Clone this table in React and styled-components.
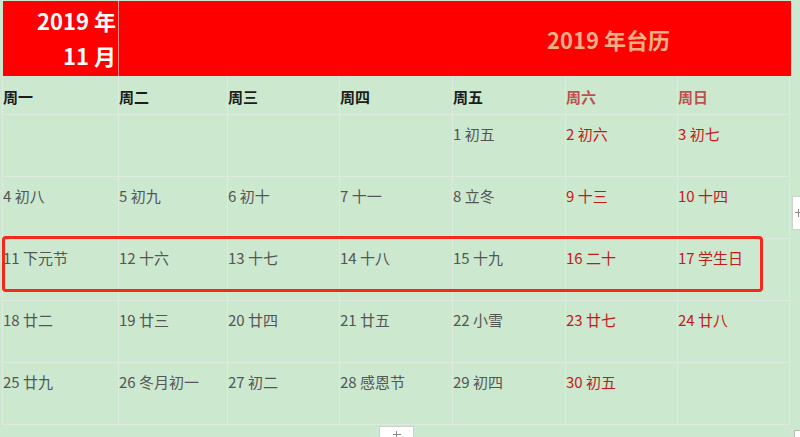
import React from 'react';
import styled, { createGlobalStyle } from 'styled-components';

const GlobalStyle = createGlobalStyle`
  html, body {
    margin: 0;
    padding: 0;
    background: #cce8cf;
  }
  body {
    font-family: 'Noto Sans CJK SC', 'Noto Sans', sans-serif;
  }
`;

// 列宽 (px)
const colWidths = [116, 109, 112, 113, 113, 112, 112];

const weekDays = ['周一', '周二', '周三', '周四', '周五', '周六', '周日'];

// 2019年11月 日历数据
const weeks = [
  ['', '', '', '', '1 初五', '2 初六', '3 初七'],
  ['4 初八', '5 初九', '6 初十', '7 十一', '8 立冬', '9 十三', '10 十四'],
  ['11 下元节', '12 十六', '13 十七', '14 十八', '15 十九', '16 二十', '17 学生日'],
  ['18 廿二', '19 廿三', '20 廿四', '21 廿五', '22 小雪', '23 廿七', '24 廿八'],
  ['25 廿九', '26 冬月初一', '27 初二', '28 感恩节', '29 初四', '30 初五', ''],
];

const App = () => {
  return (
    <Page>
      <GlobalStyle />
      <Sheet>
        <TitleRow>
          <MonthCell>
            <span>2019 年</span>
            <span>11 月</span>
          </MonthCell>
          <TitleCell>2019 年台历</TitleCell>
        </TitleRow>
        <Grid>
          {weekDays.map((d, i) => (
            <HeadCell key={d} weekend={i >= 5}>
              {d}
            </HeadCell>
          ))}
          {weeks.map((week, r) =>
            week.map((day, i) => (
              <DayCell key={`${r}-${i}`} weekend={i >= 5}>
                {day}
              </DayCell>
            ))
          )}
        </Grid>
      </Sheet>
      <Highlight />
      <SideTab />
      <BottomTab />
      <CornerMark />
    </Page>
  );
};

const Page = styled.div`
  position: relative;
  width: 800px;
  height: 437px;
  overflow: hidden;
  background: #cce8cf;
`;

const Sheet = styled.div`
  display: flex;
  flex-direction: column;
  width: 788px;
  padding: 1px 0 0 3px;
`;

const TitleRow = styled.div`
  display: grid;
  grid-template-columns: 116px 1fr;
  height: 75px;
  background: #ff0000;
`;

const MonthCell = styled.div`
  display: flex;
  flex-direction: column;
  align-items: flex-end;
  justify-content: space-around;
  padding: 2px 2px 4px 0;
  border-right: 1px solid #ff8a8a;
  color: #ffffff;
  font-weight: 700;
  font-size: 22px;
  line-height: 26px;
`;

const TitleCell = styled.div`
  display: flex;
  align-items: center;
  padding: 0 0 0 428px;
  color: #f6b086;
  font-weight: 700;
  font-size: 22px;
`;

const Grid = styled.div`
  display: grid;
  grid-template-columns: ${colWidths.map(w => `${w}px`).join(' ')};
  grid-template-rows: 39px repeat(5, 62px);
  border-left: 1px solid #dcebdd;
  margin-left: -1px;
`;

const HeadCell = styled.div`
  display: flex;
  align-items: center;
  padding: 3px 0 0 0;
  border-right: 1px solid #dcebdd;
  border-bottom: 1px solid #dcebdd;
  color: ${props => (props.weekend ? '#c0504d' : '#1c1c1c')};
  font-weight: 700;
  font-size: 15px;
`;

const DayCell = styled.div`
  padding: 9px 0 0 0;
  border-right: 1px solid #dcebdd;
  border-bottom: 1px solid #dcebdd;
  color: ${props => (props.weekend ? '#c41a1a' : '#555555')};
  font-size: 15px;
  line-height: 20px;
  white-space: nowrap;
  overflow: hidden;
`;

const Highlight = styled.div`
  position: absolute;
  left: 2px;
  top: 236px;
  width: 755px;
  height: 50px;
  border: 3px solid #f5281c;
  border-radius: 4px;
  pointer-events: none;
`;

// 加号 (CSS 画出)
const Cross = `
  &::before,
  &::after {
    content: '';
    position: absolute;
    background: #888888;
  }
`;

const SideTab = styled.div`
  position: absolute;
  left: 792px;
  top: 196px;
  width: 12px;
  height: 32px;
  background: #ffffff;
  border: 1px solid #d0d0d0;
  ${Cross}
  &::before {
    left: 2px;
    top: 15px;
    width: 8px;
    height: 1px;
  }
  &::after {
    left: 5px;
    top: 12px;
    width: 1px;
    height: 8px;
  }
`;

const BottomTab = styled.div`
  position: absolute;
  left: 379px;
  top: 426px;
  width: 33px;
  height: 14px;
  background: #ffffff;
  border: 1px solid #d0d0d0;
  ${Cross}
  &::before {
    left: 13px;
    top: 7px;
    width: 8px;
    height: 1px;
  }
  &::after {
    left: 16px;
    top: 4px;
    width: 1px;
    height: 8px;
  }
`;

const CornerMark = styled.div`
  position: absolute;
  left: 794px;
  top: 430px;
  width: 6px;
  height: 7px;
  background: #ffffff;
  border-left: 1px solid #bbbbbb;
  border-top: 1px solid #bbbbbb;
`;

export default App;
